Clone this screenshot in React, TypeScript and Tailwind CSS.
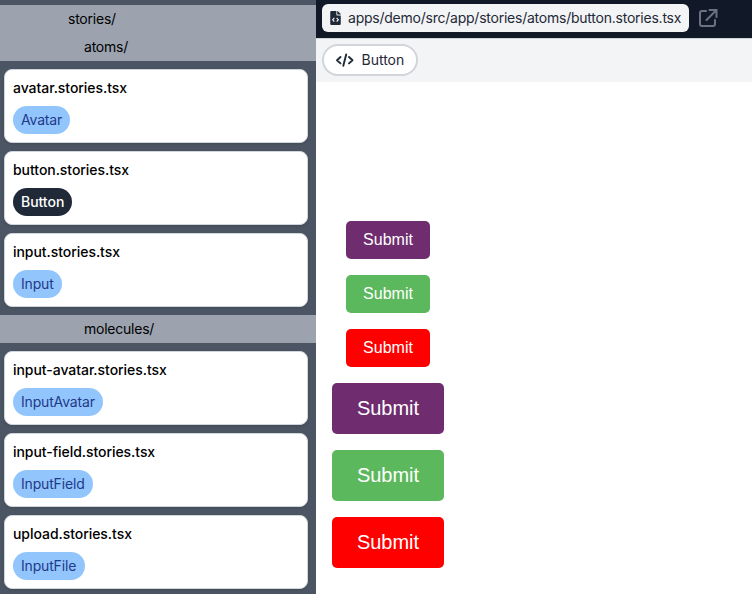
import React from "react";

type Story = { file: string; name: string; active?: boolean; pill: string };

const atoms: Story[] = [
  { file: "avatar.stories.tsx", name: "Avatar", pill: "w-[57px]" },
  { file: "button.stories.tsx", name: "Button", active: true, pill: "w-[59px]" },
  { file: "input.stories.tsx", name: "Input", pill: "w-[49px]" },
];

const molecules: Story[] = [
  { file: "input-avatar.stories.tsx", name: "InputAvatar", pill: "w-[90px]" },
  { file: "input-field.stories.tsx", name: "InputField", pill: "w-[80px]" },
  { file: "upload.stories.tsx", name: "InputFile", pill: "w-[72px]" },
];

function StoryCard({ story }: { story: Story }) {
  return (
    <div className="h-[74px] rounded-lg border border-gray-300 bg-white px-2 pt-2 shadow">
      <div className="h-5 text-sm leading-5 font-medium tracking-[-0.05px] whitespace-nowrap text-black">
        {story.file}
      </div>
      <div
        className={`mt-2 flex h-7 items-center rounded-full pl-2 text-sm whitespace-nowrap ${story.pill} ${
          story.active
            ? "bg-[#1f2937] font-medium tracking-[-0.04px] text-white"
            : "bg-[#93c5fd] tracking-[-0.17px] text-[#1e3a8a]"
        }`}
      >
        {story.name}
      </div>
    </div>
  );
}

function StoryList({ stories }: { stories: Story[] }) {
  return (
    <div className="flex flex-col gap-2 py-2 pr-2 pl-1">
      {stories.map((s) => (
        <StoryCard key={s.file} story={s} />
      ))}
    </div>
  );
}

function Folder({ name, indent }: { name: string; indent: string }) {
  return (
    <div className={`h-7 bg-[#9ca3af] text-sm leading-7 tracking-[-0.23px] text-black ${indent}`}>{name}</div>
  );
}

const colors = ["bg-[#6f2c6f]", "bg-[#5cb85c]", "bg-[#ff0000]"];

export default function App() {
  return (
    <div className="flex h-[594px] w-[752px] overflow-hidden bg-white font-['Inter',sans-serif]">
      <aside className="w-[316px] shrink-0 bg-[#4b5563] pt-[5px]">
        <Folder name="stories/" indent="pl-[68px]" />
        <Folder name="atoms/" indent="pl-[84px]" />
        <StoryList stories={atoms} />
        <Folder name="molecules/" indent="pl-[84px]" />
        <StoryList stories={molecules} />
      </aside>
      <main className="flex min-w-0 flex-1 flex-col">
        <header className="flex h-[39px] items-start border-b border-[#d1d5db] bg-[#111827] pt-1 pl-1.5">
          <div className="flex h-7 w-[367px] items-center rounded-md bg-[#f3f4f6] pl-2 text-sm text-[#1f2937]">
            <svg className="mr-[7px] h-[14px] w-[11px] shrink-0" viewBox="0 0 384 512" fill="currentColor">
              <path d="M384 121.941V128H256V0h6.059c6.365 0 12.47 2.529 16.971 7.029l97.941 97.941A24.005 24.005 0 0 1 384 121.941zM248 160c-13.2 0-24-10.8-24-24V0H48C20 0 0 20 0 48v416c0 28 20 48 48 48h288c28 0 48-20 48-48V160H248z" />
              <path d="M150 255l-60 65 60 65M234 255l60 65-60 65" fill="none" stroke="#f3f4f6" strokeWidth="42" />
            </svg>
            <span className="tracking-[-0.235px] whitespace-nowrap">
              apps/demo/src/app/stories/atoms/button.stories.tsx
            </span>
          </div>
          <svg
            className="mt-1 ml-[9px] h-5 w-5 text-[#6b7280]"
            viewBox="0 0 20 20"
            fill="none"
            stroke="currentColor"
            strokeWidth="2"
          >
            <path d="M8 3H4Q2 3 2 5v11q0 2 2 2h11q2 0 2-2v-4" strokeLinecap="round" />
            <path d="M11.5 2h7v7M18 2.5 8.5 12" strokeLinecap="round" />
          </svg>
        </header>
        <div className="h-[43px] bg-[#f3f4f6] pt-[5px] pl-1.5">
          <div className="flex h-8 w-24 items-center rounded-full border-2 border-[#d1d5db] bg-white pl-[11px] text-sm text-[#1f2937]">
            <svg
              className="mr-[7.5px] h-[14px] w-[19px] shrink-0"
              viewBox="0 0 19 14"
              fill="none"
              stroke="currentColor"
              strokeWidth="1.9"
              strokeLinecap="round"
              strokeLinejoin="round"
            >
              <path d="m5.5 4-3.5 3.2 3.5 3.2M14 4l3.5 3.2-3.5 3.2M11.2 1.4 8.3 12.8" />
            </svg>
            <span>Button</span>
          </div>
        </div>
        <div className="flex w-36 flex-col items-center gap-4 pt-[138.5px] font-['Liberation_Sans',Arial,sans-serif] text-white">
          {colors.map((c) => (
            <button key={c} className={`h-[38px] w-[84px] shrink-0 rounded-[5px] text-base ${c}`}>
              Submit
            </button>
          ))}
          {colors.map((c) => (
            <button key={c} className={`h-[51px] w-[112px] shrink-0 rounded-[5px] text-xl ${c}`}>
              Submit
            </button>
          ))}
        </div>
      </main>
    </div>
  );
}
